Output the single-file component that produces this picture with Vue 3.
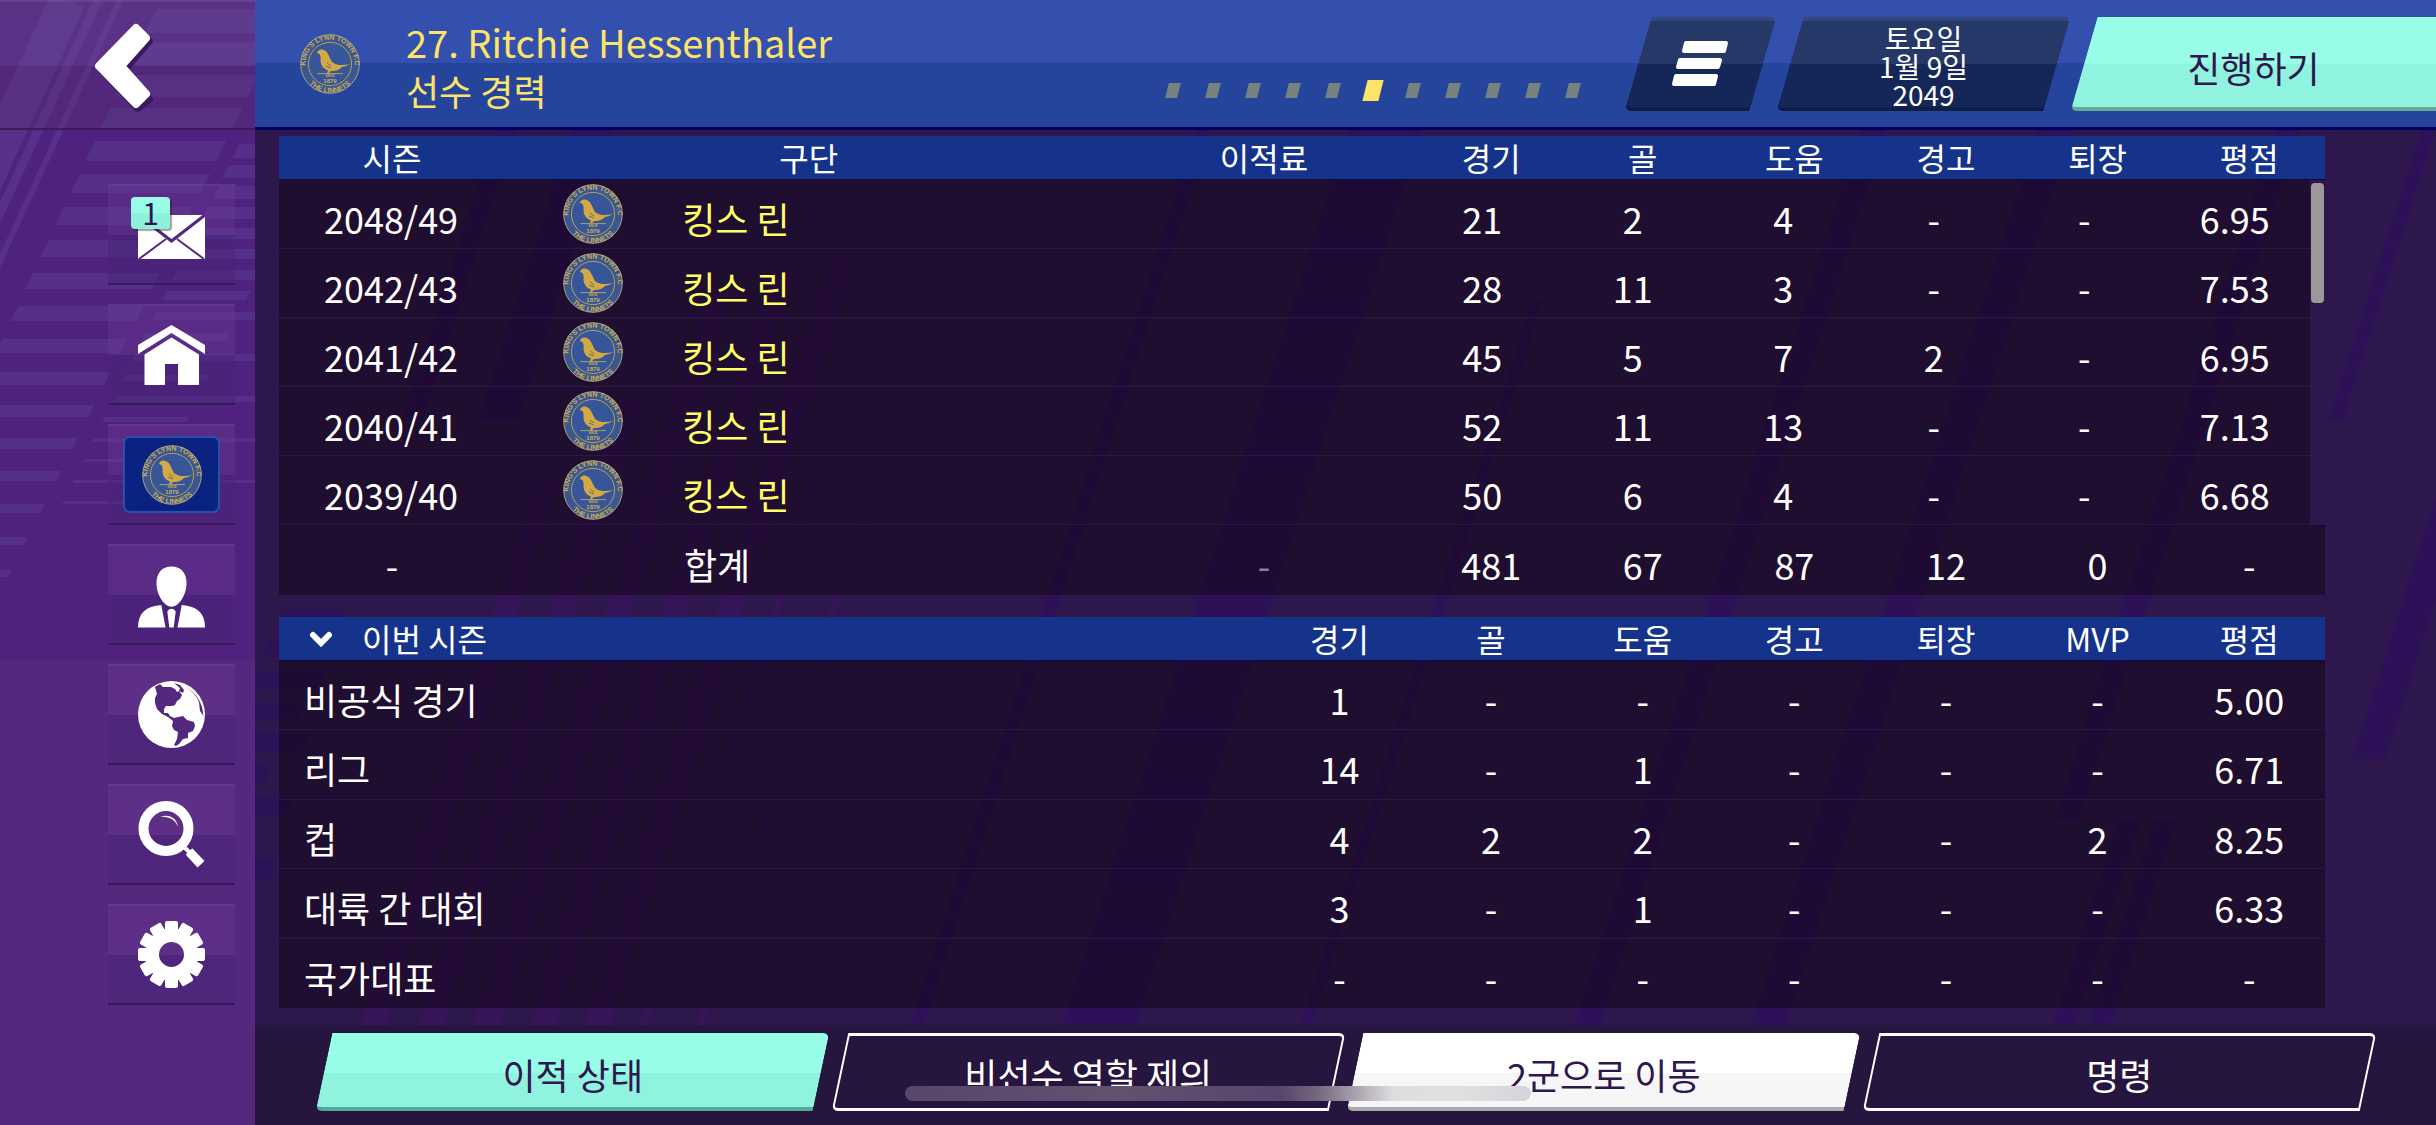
<script setup>
import { ref, h } from "vue";

const navItems = [
  { id: "mail", label: "메일" },
  { id: "home", label: "홈" },
  { id: "club", label: "구단" },
  { id: "manager", label: "감독" },
  { id: "world", label: "세계" },
  { id: "search", label: "검색" },
  { id: "settings", label: "설정" }
];

const unread = ref(1);
const page = ref(5);
const seasonOpen = ref(true);

const careerHead = ["시즌", "구단", "이적료", "경기", "골", "도움", "경고", "퇴장", "평점"];
const career = [
  { season: "2048/49", stats: ["21", "2", "4", "-", "-", "6.95"] },
  { season: "2042/43", stats: ["28", "11", "3", "-", "-", "7.53"] },
  { season: "2041/42", stats: ["45", "5", "7", "2", "-", "6.95"] },
  { season: "2040/41", stats: ["52", "11", "13", "-", "-", "7.13"] },
  { season: "2039/40", stats: ["50", "6", "4", "-", "-", "6.68"] }
];
const totals = ["481", "67", "87", "12", "0", "-"];

const currentHead = ["경기", "골", "도움", "경고", "퇴장", "MVP", "평점"];
const current = [
  { name: "비공식 경기", stats: ["1", "-", "-", "-", "-", "-", "5.00"] },
  { name: "리그", stats: ["14", "-", "1", "-", "-", "-", "6.71"] },
  { name: "컵", stats: ["4", "2", "2", "-", "-", "2", "8.25"] },
  { name: "대륙 간 대회", stats: ["3", "-", "1", "-", "-", "-", "6.33"] },
  { name: "국가대표", stats: ["-", "-", "-", "-", "-", "-", "-"] }
];

const actions = [
  { label: "이적 상태", kind: "mint" },
  { label: "비선수 역할 제의", kind: "outline" },
  { label: "2군으로 이동", kind: "white" },
  { label: "명령", kind: "outline" }
];

// Club crest: shared artwork plus the lettering round the ring
const GOLD = "#cdae52";
const Crest = () =>
  h("svg", { viewBox: "0 0 60 60", width: 60, height: 60 }, [
    h("use", { href: "#crest-art" }),
    h(
      "g",
      {
        fill: GOLD,
        "font-family": "'Liberation Sans', sans-serif",
        "font-weight": 700,
        "text-anchor": "middle"
      },
      [
        h("text", { "font-size": 7 }, [
          h("textPath", { href: "#crest-top", startOffset: "50%" }, "KING'S LYNN TOWN F.C")
        ]),
        h("text", { "font-size": 7 }, [
          h("textPath", { href: "#crest-bottom", startOffset: "50%" }, "THE LINNETS")
        ]),
        h("text", { x: 30, y: 43, "font-size": 3 }, "SINCE"),
        h("text", { x: 30, y: 49, "font-size": 6 }, "1879")
      ]
    )
  ]);

// slanted bar between two x positions
function bar(x1, x2, y, height) {
  const s = Math.round(height / 2);
  return `${x1 + s},${y} ${x2 + s},${y} ${x2},${y + height} ${x1},${y + height}`;
}

// horizontal bars behind the sidebar, thinner towards the bottom
const sideBars = [];
for (let i = 0; i < 18; i++) {
  const y = 9 + i * 33;
  sideBars.push(bar(Math.max(-12, 145 - i * 15), 280 - i * 16, y, 24 - i));
}
for (let i = 0; i < 18; i++) {
  const y = 144 + i * 21;
  const x = 232 - i * 10;
  sideBars.push(bar(x, i % 2 ? x + 84 : 260, y, Math.max(3, 14 - Math.round(i * 0.7))));
}

// stripes behind the tables: x at the footer, width, top and bottom
const stripes = [
  { x: 106, w: 25, y1: 480, y2: 1125, warm: true },
  { x: 163, w: 25, y1: 400, y2: 1125, warm: true },
  { x: 218, w: 27, y1: 300, y2: 1125, warm: true },
  { x: 275, w: 25, y1: 260, y2: 1125, warm: true },
  { x: 330, w: 25, y1: 260, y2: 1125, warm: true },
  { x: 385, w: 7, y1: 500, y2: 1125, warm: true },
  { x: 442, w: 7, y1: 400, y2: 1125, warm: true },
  { x: 655, w: 14, y1: 130, y2: 1125 },
  { x: 807, w: 74, y1: 130, y2: 1125 },
  { x: 1046, w: 10, y1: 300, y2: 1125 },
  { x: 1319, w: 26, y1: 130, y2: 1125 },
  { x: 1496, w: 35, y1: 130, y2: 1125 },
  { x: 1798, w: 22, y1: 820, y2: 1125 },
  { x: 1834, w: 22, y1: 820, y2: 1125 },
  { x: 1734, w: 24, y1: 130, y2: 820 },
  { x: 2012, w: 33, y1: 130, y2: 759 },
  { x: 1880, w: 14, y1: 130, y2: 420 },
  { x: 30, w: 40, y1: 130, y2: 420 },
  { x: -46, w: 20, y1: 130, y2: 420 }
];
function stripePoints(s) {
  const top = s.x + (1025 - s.y1) * 0.32;
  const bottom = s.x + (1025 - s.y2) * 0.32;
  return `${top},${s.y1} ${top + s.w},${s.y1} ${bottom + s.w},${s.y2} ${bottom},${s.y2}`;
}
</script>

<template>
  <svg class="defs" aria-hidden="true">
    <defs>
      <path id="crest-top" d="M6.1 37 A24.6 24.6 0 1 1 53.9 37" transform="translate(0 -1)" />
      <path id="crest-bottom" d="M2.2 34 A28 28 0 0 0 57.8 34" />
    </defs>
    <symbol id="crest-art" viewBox="0 0 60 60">
      <circle cx="30" cy="30" r="29.3" fill="#3b5791" stroke="#a9a383" />
      <circle cx="30" cy="30" r="21.6" fill="#37569a" stroke="#b39f55" />
      <path
        d="M17 19 Q18 15 22 15.5 Q26 16 28 20 L32 28 Q35 30.5 39 31 Q46 31.5 51 29.5 Q46 32.5 42 33 Q38 37.5 31 37 L29 39 H27 L28 36.5 Q21 34 20.5 27 Q21 22 19.5 20 Z"
        fill="#d3a944"
      />
      <path d="M27 29 l4 3 M26 32 l5 2" stroke="#37569a" stroke-width="0.7" />
      <path d="M17.5 39.6 H43" stroke="#b39f55" stroke-width="1" />
    </symbol>
  </svg>

  <div class="app">
    <aside class="sidebar">
      <svg class="side-art" viewBox="0 0 255 660" aria-hidden="true">
        <rect width="255" height="660" fill="#4e227e" />
        <polygon v-for="(p, i) in sideBars" :key="i" :points="p" fill="#573189" opacity="0.85" />
        <g stroke="#57308a" fill="none">
          <path d="M98 0 L-40 300" stroke-width="9" />
          <path d="M68 0 L-70 300" stroke-width="36" />
          <path d="M120 0 L-18 300" stroke-width="6" />
        </g>
      </svg>
      <div class="back-bar">
        <button class="back" aria-label="뒤로">
          <svg viewBox="0 0 62 92" width="62" height="92">
            <g stroke-width="8" stroke-linejoin="round">
              <path
                d="M8 47 L44 9 L55 18 L30 47 L55 76 L44 85 Z"
                fill="#3a1a5c"
                stroke="#3a1a5c"
              />
              <path
                d="M5 43 L42 5 L52 15 L27 43 L52 71 L42 81 Z"
                fill="#fff"
                stroke="#fff"
              />
            </g>
          </svg>
        </button>
      </div>
      <nav class="nav">
        <button
          v-for="item in navItems"
          :key="item.id"
          class="nav-item"
          :aria-label="item.label"
        >
          <span v-if="item.id === 'club'" class="club-tile">
            <Crest />
          </span>
          <svg v-else viewBox="0 0 67 67" width="67" height="67" fill="#fff">
            <template v-if="item.id === 'mail'">
              <rect y="14" width="67" height="44" />
              <path d="M1 58 L28 38 M66 58 L39 38" stroke="#54287e" stroke-width="2" />
              <path d="M0 14 L33.5 40 L67 14" fill="none" stroke="#54287e" stroke-width="3" />
            </template>
            <template v-else-if="item.id === 'home'">
              <path d="M33.5 4 L67 24 V33 L33.5 12 L0 33 V24 Z" />
              <path d="M33.5 16.5 L61 33.5 V64 H40 V43 H27 V64 H6.5 V33.5 Z" />
            </template>
            <template v-else-if="item.id === 'manager'">
              <path d="M33.5 5.5 C43 5.5 48.5 12 48.5 22 C48.5 34 41 45.7 33.5 45.7 C26 45.7 18.5 34 18.5 22 C18.5 12 24 5.5 33.5 5.5 Z" />
              <path d="M23.3 44 L27.5 66.5 H0 C0 52 8 45 23.3 44 Z" />
              <path d="M43.7 44 L39.5 66.5 H67 C67 52 59 45 43.7 44 Z" />
              <path d="M31 48.5 Q33.5 47 36 48.5 L37.7 50.5 L35.7 66.5 H31.3 L29.3 50.5 Z" />
            </template>
            <template v-else-if="item.id === 'world'">
              <circle cx="33.5" cy="33.5" r="33.5" />
              <g fill="#52297f">
                <path d="M17 6 L22 3 L25 6 L33 6 L37 8 L39 11 L41 10 L44 14 L42 18 L39 20 L37 24 L34 25 L28 25 L26 28 L26 32 L30 32 L32 35 L36 37 L45 35 L49 39 L56 41 L57 45 L55 50 L50 52 L50 57 L45 58 L41 63 L38 65 L36 64 L39 58 L40 51 L36 49 L34 45 L35 40 L30 36 L24 33 L19 28 L17 22 L17 17 L19 13 Z" />
                <path d="M36 2 L42 4 L46 9 L45 12 L41 10 L42 7 Z" />
                <path d="M47 5 Q60 13 64 26 L65.5 35 L62 30 L61 21 Q57 12 47 5 Z" />
              </g>
            </template>
            <template v-else-if="item.id === 'search'">
              <circle cx="28" cy="27.5" r="22.5" fill="none" stroke="#fff" stroke-width="10" />
              <path d="M22 16 Q36 11 40.5 26 Q35 14.5 22 16 Z" />
              <path d="M48 45 L52 49 L54.5 47.5 L66.5 60 L59.5 66.5 L48 54 L49 51.5 L45 48 Z" />
            </template>
            <template v-else>
              <rect
                v-for="n in 12"
                :key="n"
                x="27"
                y="0"
                width="13"
                height="16"
                rx="2"
                :transform="`rotate(${n * 30} 33.5 33.5)`"
              />
              <circle cx="33.5" cy="33.5" r="19.5" fill="none" stroke="#fff" stroke-width="14" />
            </template>
          </svg>
          <span v-if="item.id === 'mail'" class="badge">{{ unread }}</span>
        </button>
      </nav>
    </aside>

    <main class="main">
      <svg class="main-art" viewBox="0 0 2181 1125" preserveAspectRatio="none" aria-hidden="true">
        <polygon
          v-for="(s, i) in stripes"
          :key="i"
          :points="stripePoints(s)"
          :fill="s.warm ? '#351558' : '#2d1158'"
        />
        <path
          fill="#2c1256"
          d="M28 610 H92 L88 618 H24 Z M14 640 H60 L52 657 H8 Z M4 671 H70 L62 690 H0 Z M0 703 H50 L44 719 H0 Z M0 733 H54 L46 752 H0 Z M0 765 H15 L10 784 H0 Z M0 797 H40 L34 815 H0 Z M0 859 H20 L14 879 H0 Z"
        />
      </svg>

      <header class="topbar">
        <Crest />
        <div class="title">
          <h1>27. Ritchie Hessenthaler</h1>
          <p>선수 경력</p>
        </div>
        <div class="dots">
          <button
            v-for="n in 11"
            :key="n"
            :class="{ active: n - 1 === page }"
            :aria-label="`${n}`"
            @click="page = n - 1"
          ></button>
        </div>
        <button class="slant top-btn menu" aria-label="메뉴">
          <svg viewBox="0 0 57 46" width="57" height="46" fill="#fff" stroke="#fff" stroke-width="4" stroke-linejoin="round">
            <path d="M14 2 H54 L52 10 H12 Z M8 19 H48 L46 26 H6 Z M4 35 H44 L42 43 H2 Z" />
          </svg>
        </button>
        <button class="slant top-btn date">
          <span>토요일</span>
          <span>1월 9일</span>
          <span>2049</span>
        </button>
        <button class="slant top-btn continue">진행하기</button>
      </header>

      <section class="content">
        <div class="career-wrap">
          <table class="career">
            <thead>
              <tr>
                <th v-for="label in careerHead" :key="label" scope="col">{{ label }}</th>
              </tr>
            </thead>
            <tbody>
              <tr v-for="row in career" :key="row.season">
                <td>{{ row.season }}</td>
                <td class="club">
                  <Crest />
                  <a href="#">킹스 린</a>
                </td>
                <td></td>
                <td v-for="(s, i) in row.stats" :key="i">{{ s }}</td>
              </tr>
            </tbody>
            <tfoot>
              <tr>
                <td>-</td>
                <td class="total">합계</td>
                <td class="dim">-</td>
                <td v-for="(s, i) in totals" :key="i">{{ s }}</td>
              </tr>
            </tfoot>
          </table>
          <div class="thumb"></div>
        </div>

        <table class="current">
          <thead>
            <tr>
              <th scope="col">
                <button class="fold" @click="seasonOpen = !seasonOpen">
                  <svg viewBox="0 0 24 16" width="24" height="16">
                    <path d="M4 4 L12 12 L20 4" fill="none" stroke="#fff" stroke-width="6" stroke-linecap="round" />
                  </svg>
                  이번 시즌
                </button>
              </th>
              <th v-for="label in currentHead" :key="label" scope="col">{{ label }}</th>
            </tr>
          </thead>
          <tbody v-if="seasonOpen">
            <tr v-for="row in current" :key="row.name">
              <th scope="row">{{ row.name }}</th>
              <td v-for="(s, i) in row.stats" :key="i">{{ s }}</td>
            </tr>
          </tbody>
        </table>
      </section>

      <footer class="actions">
        <button v-for="a in actions" :key="a.label" class="slant action" :class="a.kind">
          {{ a.label }}
        </button>
      </footer>
    </main>

    <div class="home-indicator"></div>
  </div>
</template>

<style>
body {
  margin: 0;
  background: #2e174d;
}
</style>

<style scoped>
* {
  box-sizing: border-box;
}

.defs {
  position: absolute;
  width: 0;
  height: 0;
}

.app {
  position: relative;
  display: flex;
  min-height: 100vh;
  overflow: hidden;
  font-family: "Noto Sans CJK KR", sans-serif;
  font-size: 36px;
  line-height: 48px;
  color: #fff;
}

button {
  margin: 0;
  padding: 0;
  border: 0;
  background: none;
  color: inherit;
  font: inherit;
  cursor: pointer;
}

svg {
  display: block;
  flex: none;
}

/* Sidebar */
.sidebar {
  position: relative;
  flex: 0 0 255px;
  background: #54287e;
}

.side-art {
  position: absolute;
  top: 0;
  left: 0;
  width: 255px;
  height: 660px;
}

.back-bar {
  position: relative;
  height: 130px;
  padding: 21px 0 0 94px;
  border-top: 2px solid rgba(255, 255, 255, 0.12);
  border-bottom: 2px solid #3b1a5e;
  background: linear-gradient(rgba(110, 80, 150, 0.35) 64px, rgba(90, 50, 120, 0.35) 64px);
}

.nav {
  position: relative;
  display: flex;
  flex-direction: column;
  gap: 19px;
  padding: 54px 20px 40px 108px;
}

.nav-item {
  position: relative;
  display: flex;
  align-items: center;
  justify-content: center;
  height: 101px;
  border-top: 2px solid rgba(255, 255, 255, 0.1);
  border-bottom: 2px solid #38195a;
  background: linear-gradient(rgba(110, 60, 150, 0.35) 50%, rgba(70, 35, 120, 0.45) 50%);
}

.club-tile {
  display: flex;
  align-items: center;
  justify-content: center;
  width: 97px;
  height: 77px;
  border: 2px solid #2b4eab;
  border-radius: 7px;
  background: #0b2380;
}

.badge {
  position: absolute;
  top: 11px;
  left: 23px;
  width: 39px;
  height: 32px;
  border-radius: 4px;
  background: linear-gradient(#98fce6 50%, #8cf0db 50%);
  box-shadow: 2px 2px 1px rgba(30, 20, 40, 0.4);
  color: #2c1650;
  font-size: 30px;
  line-height: 30px;
  text-align: center;
}

/* Main column */
.main {
  position: relative;
  flex: 1;
  display: flex;
  flex-direction: column;
  min-width: 0;
  background: #2e174d;
}

.main-art {
  position: absolute;
  width: 100%;
  height: 100%;
}

.topbar {
  position: relative;
  display: flex;
  align-items: center;
  height: 130px;
  padding-left: 45px;
  border-bottom: 3px solid #00005f;
  background: linear-gradient(#3350ae 50%, #25449c 50%);
  overflow: hidden;
}

.title {
  flex: 1;
  padding: 5px 0 0 46px;
  color: #fce36a;
}

.title h1 {
  margin: 0;
  font-size: 38px;
  font-weight: 400;
  line-height: 48px;
}

.title p {
  margin: 0;
}

.dots {
  display: flex;
  align-items: center;
  padding: 53px 32px 0 0;
}

.dots button {
  width: 12px;
  height: 15px;
  margin: 0 14px;
  background: #75827f;
  transform: skewX(-14deg);
}

.dots .active {
  width: 16px;
  height: 21px;
  margin: 0 12px;
  background: #fce36a;
}

/* Slanted buttons: the shape is a skewed layer under the label */
.slant {
  position: relative;
  z-index: 0;
}

.slant::before {
  content: "";
  position: absolute;
  z-index: -1;
  inset: 0 13px;
  border-radius: 0 6px 0 6px;
  transform: skewX(-16deg);
}

.top-btn {
  flex: none;
  display: flex;
  flex-direction: column;
  align-items: center;
  justify-content: center;
  height: 94px;
  margin-right: 1px;
}

.top-btn::before {
  border-top: 4px solid #33477b;
  border-bottom: 4px solid #111e44;
  background: linear-gradient(#263867 43px, #152658 43px);
}

.menu {
  width: 151px;
}

.date {
  width: 293px;
  padding-top: 4px;
  font-size: 28px;
  line-height: 28px;
}

.continue {
  width: 365px;
  margin-right: 0;
  padding-top: 6px;
  color: #2e174d;
}

.continue::before {
  right: -30px;
  border-top: 0;
  border-bottom-color: #63a99d;
  background: linear-gradient(#99fce7 47px, #90f3df 47px);
}

/* Tables */
.content {
  position: relative;
  flex: 1;
  display: flex;
  flex-direction: column;
  gap: 22px;
  padding: 6px 111px 17px 24px;
}

.career-wrap {
  position: relative;
}

table,
thead,
tfoot,
tbody {
  display: block;
}

tr {
  display: grid;
  align-items: stretch;
}

.career tr {
  grid-template-columns: 1104fr 2970fr 1480fr repeat(6, 741fr);
}

.current tr {
  grid-template-columns: 4812fr repeat(7, 741fr);
}

th,
td {
  min-width: 0;
  padding: 0;
  font-weight: 400;
  text-align: center;
}

thead {
  height: 44px;
  border-bottom: 1px solid #0a0a45;
  background: #16338c;
  font-size: 32px;
  line-height: 43px;
}

tbody tr,
tfoot tr {
  height: 69px;
  border-bottom: 1px solid #2c1848;
  background: rgba(14, 4, 14, 0.48);
  line-height: 60px;
}

tbody td,
tbody th,
tfoot td {
  padding-top: 8px;
}

.career tbody {
  margin-right: 15px;
}

tfoot tr {
  height: 70px;
  border-top: 1px solid #150822;
  border-bottom: 0;
}

tbody .club {
  display: flex;
  align-items: flex-start;
  gap: 59px;
  padding: 4px 0 0 60px;
}

.club a {
  padding-top: 4px;
  color: #ffff66;
  text-decoration: none;
}

.total {
  padding-left: 179px;
  text-align: left;
}

.dim {
  color: #8b8494;
}

.thumb {
  position: absolute;
  top: 47px;
  right: 1px;
  width: 13px;
  height: 120px;
  border-radius: 4px;
  background: #9c9799;
}

.current tbody {
  display: grid;
  grid-auto-rows: 1fr;
  height: 347px;
}

.current tbody tr {
  height: auto;
}

.current tbody tr:last-child {
  border-bottom: 0;
}

.current tbody th {
  padding-left: 25px;
  text-align: left;
}

.fold {
  display: flex;
  align-items: center;
  gap: 29px;
  padding-left: 30px;
}

/* Bottom actions */
.actions {
  position: relative;
  display: flex;
  gap: 4px;
  height: 100px;
  padding: 8px 61px 14px 62px;
  background: #26153e;
}

.action {
  flex: 1;
  padding-top: 4px;
}

.action::before {
  inset: 0 8px 0 7px;
  transform: skewX(-12deg);
}

.mint {
  color: #2e174d;
}

.mint::before {
  border-bottom: 4px solid #52a996;
  background: linear-gradient(#97fde7 40px, #8ff3df 40px);
}

.white {
  color: #2e174d;
}

.white::before {
  border-bottom: 4px solid #a9a9a9;
  background: linear-gradient(#fff 40px, #f6f6f6 40px);
}

.outline::before {
  border: 2px solid #fff;
  border-width: 3px 2px;
}

.home-indicator {
  position: absolute;
  bottom: 24px;
  left: 50%;
  width: 626px;
  height: 15px;
  border-radius: 8px;
  background: linear-gradient(
    90deg,
    #57466b,
    #63516f 34%,
    #57456c 60%,
    #76677f 66%,
    #dedee0 78%,
    #e0e0e0 88%,
    #d6d4dc
  );
  transform: translateX(-50%);
}
</style>
